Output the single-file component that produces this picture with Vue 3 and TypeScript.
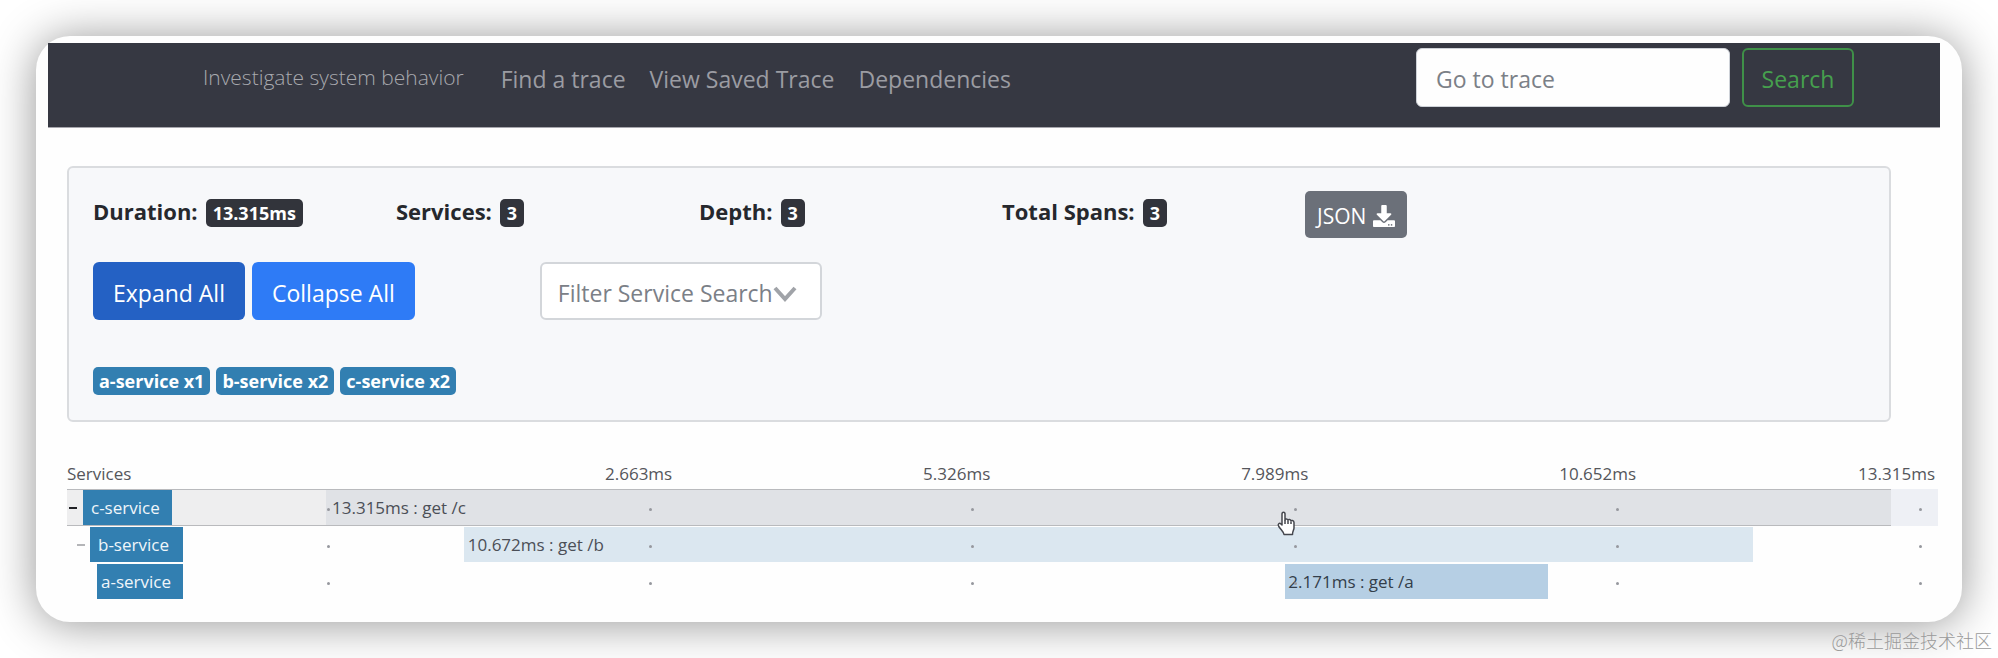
<script setup lang="ts">
import { ref } from 'vue'

interface Stat {
  label: string
  value: string
}

interface Span {
  service: string
  label: string
  start: number
  width: number
  tone: string
  expandable: boolean
  active: boolean
}

const navLinks: string[] = ['Find a trace', 'View Saved Trace', 'Dependencies']

const stats: Stat[] = [
  { label: 'Duration:', value: '13.315ms' },
  { label: 'Services:', value: '3' },
  { label: 'Depth:', value: '3' },
  { label: 'Total Spans:', value: '3' },
]

const serviceCounts: string[] = ['a-service x1', 'b-service x2', 'c-service x2']

const marks: string[] = ['2.663ms', '5.326ms', '7.989ms']

// start and width are percentages of the timeline track
const spans: Span[] = [
  { service: 'c-service', label: '13.315ms : get /c', start: 0, width: 100, tone: 'root', expandable: true, active: true },
  { service: 'b-service', label: '10.672ms : get /b', start: 8.8, width: 82.4, tone: 'child', expandable: true, active: false },
  { service: 'a-service', label: '2.171ms : get /a', start: 61.3, width: 16.8, tone: 'leaf', expandable: false, active: false },
]

const traceId = ref('')
const filter = ref('')
</script>

<template>
  <div class="page">
    <div class="window">
      <header class="navbar">
        <span class="tagline">Investigate system behavior</span>
        <nav class="links">
          <a v-for="link in navLinks" :key="link" href="#">{{ link }}</a>
        </nav>
        <form class="search" @submit.prevent>
          <input v-model="traceId" class="search-input" type="text" placeholder="Go to trace" aria-label="Go to trace" />
          <button class="search-button" type="submit">Search</button>
        </form>
      </header>

      <main class="content">
        <section class="summary">
          <div class="stats">
            <div v-for="stat in stats" :key="stat.label" class="stat">
              <span>{{ stat.label }}</span>
              <span class="badge dark">{{ stat.value }}</span>
            </div>
            <div class="stat">
              <button class="json-button" type="button">
                JSON
                <svg class="download" viewBox="0 0 512 512" aria-hidden="true">
                  <path
                    fill="currentColor"
                    d="M216 0h80c13.3 0 24 10.7 24 24v168h87.700c17.800 0 26.700 21.500 14.100 34.100L269.700 378.300c-7.500 7.500-19.800 7.500-27.300 0L90.100 226.100c-12.600-12.600-3.700-34.100 14.100-34.100H192V24c0-13.300 10.700-24 24-24zm296 376v112c0 13.300-10.700 24-24 24H24c-13.300 0-24-10.700-24-24V376c0-13.300 10.700-24 24-24h146.700l49 49c20.100 20.100 52.500 20.100 72.600 0l49-49H488c13.300 0 24 10.700 24 24zm-124 88c0-11-9-20-20-20s-20 9-20 20 9 20 20 20 20-9 20-20zm64 0c0-11-9-20-20-20s-20 9-20 20 9 20 20 20 20-9 20-20z"
                  />
                </svg>
              </button>
            </div>
          </div>

          <div class="actions">
            <div class="toggles">
              <button class="action pressed" type="button">Expand All</button>
              <button class="action" type="button">Collapse All</button>
            </div>
            <div class="filter">
              <select v-model="filter" class="filter-select" aria-label="Filter Service Search">
                <option value="">Filter Service Search</option>
                <option v-for="span in spans" :key="span.service" :value="span.service">{{ span.service }}</option>
              </select>
              <svg class="chevron" viewBox="0 0 24 16" aria-hidden="true">
                <path d="M2 2 L12 13 L22 2" fill="none" stroke="currentColor" stroke-width="4" />
              </svg>
            </div>
          </div>

          <div class="services">
            <span v-for="item in serviceCounts" :key="item" class="badge blue">{{ item }}</span>
          </div>
        </section>

        <section class="timeline">
          <div class="axis">
            <span>Services</span>
            <span v-for="mark in marks" :key="mark">{{ mark }}</span>
            <span class="axis-end"><span>10.652ms</span><span>13.315ms</span></span>
          </div>

          <div v-for="(span, depth) in spans" :key="span.service" class="row" :class="{ active: span.active }">
            <div class="row-label" :class="'depth-' + depth">
              <button v-if="span.expandable" class="toggle" type="button" :aria-label="'Toggle ' + span.service"></button>
              <span class="service">{{ span.service }}</span>
            </div>
            <div class="track">
              <div class="bar" :class="span.tone" :style="{ marginLeft: span.start + '%', width: span.width + '%' }">
                {{ span.label }}
              </div>
            </div>
            <div class="tail"></div>
            <div class="ticks"><i v-for="n in 6" :key="n"></i></div>
            <svg v-if="span.active" class="pointer" viewBox="0 0 18 25" aria-hidden="true">
              <path
                d="M5 14 V3 C5 .5 8 .5 8 3 V9 C8 7.500 11 7.500 11 9.500 C11 8 14 8.200 14 10.200 C14 9 17 9.200 17 11.500 V17 C17 19 15.500 20 15.500 23.500 H7 C6.500 20.500 4 19 1.800 15.500 C.2 13 2.500 11.500 4 13 Z"
                fill="#fff"
                stroke="#45474e"
                stroke-width="1.500"
                stroke-linejoin="round"
              />
              <path d="M8 9 V13 M11 10 V13 M14 11 V13" stroke="#45474e" stroke-width="1.500" />
            </svg>
          </div>
        </section>
      </main>
    </div>
    <footer class="watermark">@稀土掘金技术社区</footer>
  </div>
</template>

<style>
body {
  margin: 0;
  background: #fff;
}
</style>

<style scoped>
* {
  box-sizing: border-box;
}

.page {
  padding: 36px 36px 0;
  overflow: hidden;
  font-family: 'Open Sans', 'Noto Sans', 'Noto Sans CJK SC', sans-serif;
  font-size: 23px;
  color: #26282d;
}

button,
input,
select {
  font: inherit;
}

.window {
  padding: 7px 22px 23px 12px;
  border-radius: 34px;
  background: #fefefe;
  box-shadow: 0 2px 46px rgba(0, 0, 0, 0.42);
}

.navbar {
  display: flex;
  align-items: flex-start;
  height: 85px;
  padding: 5px 86px 0 155px;
  border-bottom: 1px solid #a7a6ad;
  background: #363842;
}

.tagline {
  margin-right: 37px;
  font-size: 21px;
  font-weight: 300;
  line-height: 58px;
  color: #a8a9ae;
}

.links {
  display: flex;
  gap: 24px;
  line-height: 62px;
}

.links a {
  color: #9b9ca2;
  text-decoration: none;
}

.search {
  display: flex;
  gap: 12px;
  margin-left: auto;
}

.search-input {
  width: 314px;
  height: 59px;
  padding: 3px 19px 0;
  border: 1px solid #ced2d8;
  border-radius: 6px;
  background: #fefefe;
  color: #495057;
}

.search-input::placeholder {
  color: #7b8087;
  opacity: 1;
}

.search-button {
  width: 112px;
  height: 59px;
  padding: 3px 0 0;
  border: 2px solid #3f9048;
  border-radius: 6px;
  background: transparent;
  color: #46a04e;
}

.content {
  padding: 38px 2px 0 19px;
}

.summary {
  margin-right: 47px;
  padding: 23px 24px 25px;
  border: 2px solid #dadcdf;
  border-radius: 6px;
  background: #f7f8fa;
}

.stats {
  display: grid;
  grid-template-columns: repeat(5, 17.100%) 1fr;
  height: 47px;
}

.stat {
  display: flex;
  align-items: flex-start;
  gap: 8px;
  font-size: 22px;
  font-weight: 700;
  line-height: 40px;
}

.badge {
  border-radius: 5px;
  color: #fff;
  font-size: 18px;
  font-weight: 700;
  line-height: 28px;
}

.dark {
  margin-top: 8px;
  padding: 0 7px;
  background: #32343b;
}

.json-button {
  display: flex;
  align-items: center;
  gap: 7px;
  height: 47px;
  padding: 2px 12px 0;
  border: 0;
  border-radius: 5px;
  background: #6b7079;
  color: #fff;
  font-size: 21px;
  font-weight: 400;
}

.download {
  width: 22px;
  height: 22px;
}

.actions {
  display: flex;
  gap: 125px;
  margin-top: 24px;
}

.toggles {
  display: flex;
  gap: 7px;
}

.action {
  height: 58px;
  padding: 3px 20px 0;
  border: 0;
  border-radius: 6px;
  background: #2e7bf6;
  color: #fff;
}

.pressed {
  background: #2461c4;
}

.filter {
  position: relative;
}

.filter-select {
  width: 282px;
  height: 58px;
  padding: 4px 16px 0;
  border: 2px solid #d3d6da;
  border-radius: 6px;
  background: #fff;
  color: #7b8087;
  appearance: none;
}

.chevron {
  position: absolute;
  top: 24px;
  right: 25px;
  width: 24px;
  height: 16px;
  color: #a0a3a8;
  pointer-events: none;
}

.services {
  display: flex;
  gap: 6px;
  margin-top: 47px;
}

.blue {
  padding: 0 6px;
  background: #327fb1;
}

.timeline {
  display: grid;
  row-gap: 2px;
  padding-top: 38px;
  font-size: 17px;
}

.axis {
  display: grid;
  grid-template-columns: 538px 17% 17% 17% 1fr;
  line-height: 27px;
  color: #55565b;
}

.axis-end {
  display: flex;
  justify-content: space-between;
  padding-right: 3px;
}

.row {
  display: grid;
  grid-template-columns: 259px 1fr 47px;
  position: relative;
  height: 35px;
  line-height: 35px;
}

.row-label {
  display: flex;
  grid-area: 1 / 1;
  align-items: stretch;
}

.depth-1 {
  padding-left: 8px;
}

.depth-2 {
  padding-left: 30px;
}

.toggle {
  width: 16px;
  padding: 0;
  border: 0;
  background: linear-gradient(#202126, #202126) 2px center / 8px 2px no-repeat;
}

.depth-1 .toggle {
  width: 15px;
  background-image: linear-gradient(#b4b5b8, #b4b5b8);
}

.service {
  width: 89px;
  padding-left: 8px;
  background: #327fb1;
  color: #f0f6fa;
}

.depth-1 .service {
  width: 93px;
}

.depth-2 .service {
  width: 86px;
  padding-left: 4px;
}

.track {
  grid-area: 1 / 2;
}

.bar {
  height: 100%;
  padding-left: 4px;
  color: #4b4f57;
  white-space: nowrap;
}

.root {
  padding-left: 6px;
  background: #e0e2e6;
}

.child {
  background: #dbe7f0;
}

.leaf {
  padding-left: 3px;
  background: #b6cfe4;
  color: #333e4a;
}

.tail {
  grid-area: 1 / 3;
}

.active {
  height: 36px;
}

.active .row-label,
.active .track {
  border: solid #b9babd;
  border-width: 1px 0;
  background: #eeeeef;
}

.active .tail {
  background: #eef0f5;
}

.ticks {
  display: grid;
  grid-area: 1 / 2 / 2 / 4;
  grid-template-columns: repeat(4, 20.200%) 1fr auto;
  align-items: center;
  padding: 4px 16px 0 1px;
  pointer-events: none;
}

.ticks i {
  width: 3px;
  height: 3px;
  border-radius: 2px;
  background: #96989e;
}

.pointer {
  position: absolute;
  top: 22px;
  left: 64.600%;
  z-index: 1;
  width: 20px;
  height: 25px;
}

.watermark {
  padding: 8px 0;
  margin-right: -30px;
  text-align: right;
  font-family: 'Noto Sans CJK SC', sans-serif;
  font-size: 18px;
  font-weight: 300;
  line-height: 20px;
  color: #9a9a9a;
}
</style>
